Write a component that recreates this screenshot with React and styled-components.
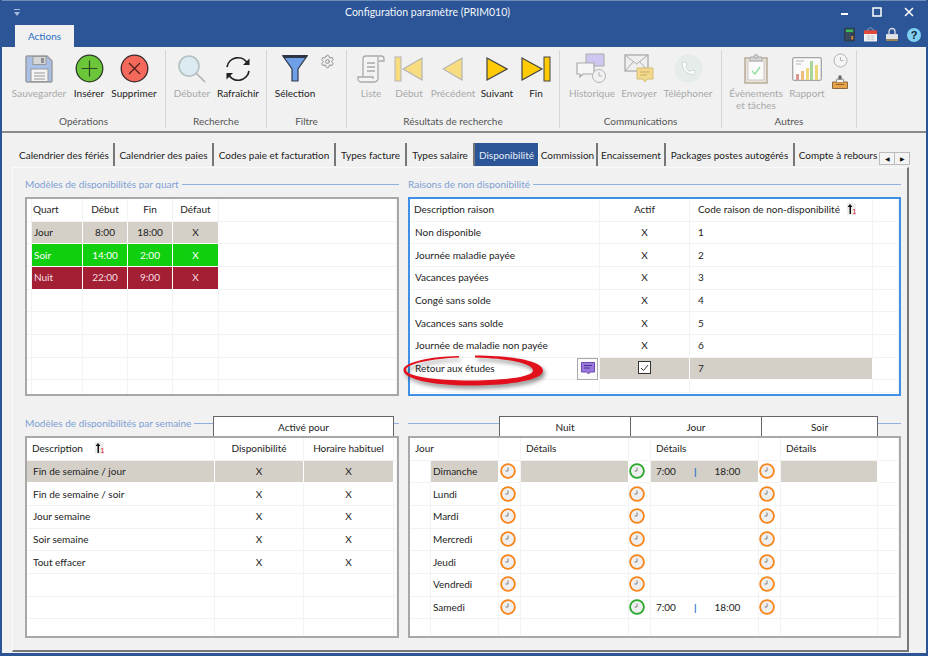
import styled, { createGlobalStyle } from "styled-components";
import { Settings, Phone } from "lucide-react";

const GlobalStyle = createGlobalStyle`
  html, body { margin: 0; padding: 0; background: #f1f1f1; }
  body { font-family: Lato, Roboto, "Liberation Sans", sans-serif; font-size: 10px; color: #222; }
`;

const Window = styled.div`
  width: 928px;
  height: 656px;
  box-sizing: border-box;
  border-style: solid;
  border-color: #2b5597;
  border-width: 0 2px 3px 2px;
  background: #f1f1f1;
  display: flex;
  flex-direction: column;
  overflow: hidden;
`;

const TitleBar = styled.div`
  height: 47px;
  margin: 0 -2px;
  background: #2b5597;
  border-top: 1px solid #6f8db9;
  box-sizing: border-box;
  display: flex;
  flex-direction: column;
`;

const TitleRow = styled.div`
  height: 22px;
  display: flex;
  align-items: center;
  position: relative;
  padding: 0 3px 0 14px;
`;

const Title = styled.div`
  color: #f2f5fa;
  font-size: 10.5px;
  margin-left: 325px;
  flex: 1;
`;

const WinButton = styled.div`
  width: 32px;
  display: flex;
  justify-content: center;
`;

const TabRow = styled.div`
  height: 22px;
  margin-top: 2px;
  display: flex;
  justify-content: space-between;
  padding-left: 15px;
  padding-right: 7px;
`;

const RibbonTab = styled.div`
  width: 59px;
  background: #f1f1f1;
  color: #2a6fc4;
  display: flex;
  align-items: center;
  justify-content: center;
`;

const Tools = styled.div`
  display: flex;
  gap: 9px;
  align-items: center;
  padding-bottom: 3px;
`;

const Ribbon = styled.div`
  height: 84px;
  display: flex;
  border-bottom: 2px solid #8a8a8a;
  box-sizing: content-box;
`;

const Group = styled.div`
  width: ${(p) => p.$w}px;
  box-sizing: border-box;
  margin-top: 3px;
  margin-bottom: 3px;
  border-right: 1px solid #d6d6d6;
  display: flex;
  flex-direction: column;
`;

const GroupItems = styled.div`
  height: 64px;
  display: flex;
  padding-left: ${(p) => p.$pad}px;
`;

const GroupName = styled.div`
  text-align: center;
  color: #555;
  line-height: 14px;
`;

const RibbonBtn = styled.div`
  width: ${(p) => p.$w}px;
  display: flex;
  flex-direction: column;
  align-items: center;
  padding-top: 3px;
  color: ${(p) => (p.$off ? "#a9a9a9" : "#222")};
  text-align: center;
  line-height: 12px;
  white-space: nowrap;
`;

const IconSlot = styled.div`
  height: 31px;
  margin-bottom: 3px;
  display: flex;
  align-items: center;
  justify-content: center;
`;

const SmallCol = styled.div`
  width: 20px;
  margin-left: 3px;
  display: flex;
  flex-direction: column;
  align-items: center;
  gap: 7px;
  padding-top: 3px;
`;

const GearSlot = styled.div`
  padding-top: 4px;
  margin-left: 2px;
  color: #8b8b8b;
`;

const Content = styled.div`
  flex: 1;
  display: flex;
  flex-direction: column;
  padding-top: 10px;
  min-height: 0;
`;

const TabStrip = styled.div`
  height: 24px;
  display: flex;
  padding-left: 13px;
  position: relative;
`;

const TabItem = styled.div`
  width: ${(p) => p.$w}px;
  box-sizing: border-box;
  display: flex;
  align-items: center;
  justify-content: center;
  white-space: nowrap;
  margin-bottom: 1px;
  color: ${(p) => (p.$on ? "#e6edf7" : "#222")};
  background: ${(p) => (p.$on ? "#2b5597" : "transparent")};
  border-right: ${(p) => (p.$last ? "none" : p.$on ? "1px solid #fff" : "2px solid #777")};
`;

const Arrows = styled.div`
  position: absolute;
  left: 878px;
  top: 9px;
  display: flex;
`;

const ArrowBtn = styled.div`
  width: 14px;
  height: 11px;
  border: 1px solid #bbb;
  margin-left: -1px;
  background: #f4f4f4;
  color: #111;
  font-size: 6px;
  line-height: 11px;
  text-align: center;
`;

const Panel = styled.div`
  margin-left: 10px;
  width: 897px;
  height: 485px;
  box-sizing: border-box;
  border-left: 1px solid #fafafa;
  border-top: 1px solid #fafafa;
  border-right: 2px solid #777;
  border-bottom: 2px solid #777;
  padding: 10px 0 0 12px;
  display: grid;
  grid-template-columns: 374px 493px;
  grid-template-rows: 218px 222px;
  column-gap: 9px;
  row-gap: 20px;
`;

const Section = styled.section`
  display: flex;
  flex-direction: column;
  min-width: 0;
`;

const Head = styled.div`
  height: 19px;
  display: flex;
  align-items: flex-start;
`;

const HeadTabbed = styled(Head)`
  height: 20px;
`;

const Label = styled.div`
  height: 11px;
  line-height: 12px;
  margin-top: ${(p) => p.$top || 0}px;
  overflow: hidden;
  color: #7d9fd3;
  white-space: nowrap;
  padding-right: 3px;
`;

const Rule = styled.div`
  flex: ${(p) => (p.$w ? `0 0 ${p.$w}px` : 1)};
  height: 1px;
  background: #8fb0e0;
  margin-top: ${(p) => p.$top || 6}px;
`;

const HeadTab = styled.div`
  width: ${(p) => p.$w}px;
  height: 20px;
  box-sizing: border-box;
  background: #fff;
  border: 1px solid #666;
  border-bottom: none;
  margin-left: -1px;
  text-align: center;
  line-height: 20px;
`;

const TableBox = styled.div`
  height: ${(p) => p.$h}px;
  box-sizing: border-box;
  background: #fff;
  border: ${(p) => (p.$focus ? "2px solid #3f8fe6" : "2px solid #a8a8a8")};
  overflow: ${(p) => (p.$focus ? "visible" : "hidden")};
`;

const Row = styled.div`
  display: grid;
  grid-template-columns: ${(p) => p.$cols};
  height: 22.67px;
  position: relative;
`;

const ShortRow = styled(Row)`
  height: 13px;
`;

const Cell = styled.div`
  display: flex;
  align-items: center;
  justify-content: ${(p) => (p.$center ? "center" : "flex-start")};
  padding-left: ${(p) => (p.$center ? 0 : p.$pad ?? 2)}px;
  padding-bottom: 1px;
  border-right: 1px solid ${(p) => (p.$bg ? "#fff" : "#f3f3f3")};
  border-bottom: 1px solid ${(p) => (p.$bg ? "#fff" : "#f3f3f3")};
  background: ${(p) => p.$bg || "transparent"};
  color: ${(p) => p.$fg || "#222"};
  grid-column: ${(p) => (p.$span ? `span ${p.$span}` : "auto")};
  white-space: nowrap;
  min-width: 0;
  gap: ${(p) => p.$gap || 0}px;
`;

const CommentBtn = styled.div`
  position: absolute;
  left: 167px;
  top: 0;
  width: 21px;
  height: 22px;
  box-sizing: border-box;
  border: 1px solid #aaa;
  background: #fafafa;
  display: flex;
  align-items: center;
  justify-content: center;
`;

const Check = styled.div`
  width: 11px;
  height: 11px;
  border: 1px solid #333;
  background: #fff;
  display: flex;
  align-items: center;
  justify-content: center;
`;

const Circled = styled.svg`
  position: absolute;
  left: -7px;
  top: -3px;
  filter: drop-shadow(2px 3px 2px rgba(0, 0, 0, 0.45));
  pointer-events: none;
`;

const TimeSep = styled.span`
  color: #2a6fc4;
  margin: 0 18px;
  font-weight: 700;
`;

const GREY = "#d4d0c8";
const GREEN = "#0fcf0f";
const RED = "#a31f34";

const Save = () => (
  <svg width="28" height="28" viewBox="0 0 28 28">
    <path d="M2 1h20l5 5v20a1 1 0 0 1-1 1H2a1 1 0 0 1-1-1V2a1 1 0 0 1 1-1z" fill="#a9bfe6" stroke="#9a9a9a" strokeWidth="1.4" />
    <rect x="8" y="1.5" width="13" height="8" fill="#d7d7d7" stroke="#999" />
    <rect x="16" y="3" width="3" height="5" fill="#8f8f8f" />
    <rect x="6" y="14" width="17" height="12.5" fill="#f4f4f4" stroke="#999" />
    <path d="M9 18h11M9 21h11M9 24h11" stroke="#999" />
  </svg>
);

const Plus = () => (
  <svg width="29" height="29" viewBox="0 0 29 29">
    <circle cx="14.5" cy="14.5" r="13.3" fill="#6cc63a" stroke="#2f3a2a" strokeWidth="1.3" />
    <path d="M14.5 6.5v16M6.5 14.5h16" stroke="#2a4a1d" strokeWidth="1.2" />
  </svg>
);

const Cross = () => (
  <svg width="29" height="29" viewBox="0 0 29 29">
    <circle cx="14.5" cy="14.5" r="13.3" fill="#f4695c" stroke="#3a2a2a" strokeWidth="1.3" />
    <path d="M9 9l11 11M20 9L9 20" stroke="#4a1f1a" strokeWidth="1.2" />
  </svg>
);

const Search = () => (
  <svg width="30" height="30" viewBox="0 0 30 30">
    <circle cx="12" cy="12" r="10" fill="#dcebf1" stroke="#b4c0c2" strokeWidth="1.6" />
    <path d="M19.5 19.5L28 28" stroke="#b0b0b0" strokeWidth="1.6" />
  </svg>
);

const Refresh = () => (
  <svg width="28" height="28" viewBox="0 0 28 28" fill="none" stroke="#222" strokeWidth="1.7">
    <path d="M3 12A11 11 0 0 1 23.5 8.5" />
    <path d="M25 16A11 11 0 0 1 4.5 19.5" />
    <path d="M25.5 3.5v6.5h-6.5" fill="#222" stroke="none" />
    <path d="M2.5 24.500v-6.500h6.500" fill="#222" stroke="none" />
  </svg>
);

const Funnel = () => (
  <svg width="28" height="29" viewBox="0 0 28 29">
    <path d="M2 2h24L17 15v12h-6V15z" fill="#6f9fe6" stroke="#333b4a" strokeWidth="1.2" />
    <path d="M1 1h26l-2 3H3z" fill="#2d3444" />
  </svg>
);

const Scroll = () => (
  <svg width="28" height="28" viewBox="0 0 28 28" fill="#f4f4f4" stroke="#a9a9a9" strokeWidth="1.3">
    <path d="M6 22V4a3 3 0 0 1 3-3h15a3 3 0 0 1 3 3v2h-5" />
    <path d="M21 2v20a4 4 0 0 1-4 5H4a3 3 0 0 1-3-3v-2h15v2" />
    <path d="M10 8h8M10 12h8M10 16h8" />
  </svg>
);

const Tri = ({ dir, bar, off }) => {
  const fill = off ? "#f8dc80" : "#ffcb05";
  const line = off ? "#b5b5b5" : "#444";
  const left = dir === "left";
  return (
    <svg width={bar ? 30 : 22} height="26" viewBox={bar ? "0 0 30 26" : "0 0 22 26"}>
      {bar && <rect x={left ? 1 : 23} y="1" width="6" height="24" fill={fill} stroke={line} />}
      {left && <path d={bar ? "M28 2v22L9 13z" : "M20 2v22L1 13z"} fill={fill} stroke={line} strokeWidth="1.2" />}
      {!left && <path d="M1 2v22l20-11z" fill={fill} stroke={line} strokeWidth="1.2" />}
    </svg>
  );
};

const History = () => (
  <svg width="32" height="31" viewBox="0 0 32 31">
    <path d="M10 1h18v12H10z" fill="#cfc6f2" stroke="#aaa" />
    <path d="M1 10h17v11H7l-3 3v-3H1z" fill="#f6f6f6" stroke="#aaa" strokeWidth="1.2" />
    <circle cx="23" cy="23" r="6.500" fill="#f1f1f1" stroke="#b5b5b5" />
    <path d="M23 19v4h3" fill="none" stroke="#b5b5b5" />
  </svg>
);

const Mail = () => (
  <svg width="30" height="30" viewBox="0 0 30 30">
    <rect x="1" y="1" width="23" height="16" fill="#efefef" stroke="#aaa" strokeWidth="1.3" />
    <path d="M1 1l11.500 9L24 1M1 17l8-9M24 17l-8-9" fill="none" stroke="#aaa" />
    <path d="M13 14h16v11h-6l-2 3-2-3h-6z" fill="#f2d98e" stroke="#d5bd72" />
    <path d="M16 18h10M16 21h7" stroke="#c9ad5e" />
  </svg>
);

const Tel = () => (
  <svg width="29" height="29" viewBox="0 0 29 29">
    <circle cx="14.5" cy="14.5" r="14" fill="#e5ecea" />
    <g transform="translate(7 7)">
      <Phone size={15} color="#c5cccb" fill="#fff" strokeWidth={1.3} />
    </g>
  </svg>
);

const Clipboard = () => (
  <svg width="24" height="30" viewBox="0 0 24 30">
    <rect x="1" y="4" width="22" height="25" fill="#e9e3d8" stroke="#b9ab9b" strokeWidth="1.5" />
    <rect x="4" y="7" width="16" height="19" fill="#fbfbfb" stroke="#c9c9c9" />
    <path d="M6 3h12v4H6z" fill="#d5d5d5" stroke="#aaa" />
    <circle cx="12" cy="2.500" r="2" fill="#d5d5d5" stroke="#aaa" />
    <path d="M8 17l3 3 5-7" fill="none" stroke="#8fdc9a" strokeWidth="1.3" />
  </svg>
);

const Chart = () => (
  <svg width="30" height="24" viewBox="0 0 30 24">
    <rect x="0.700" y="0.700" width="28.600" height="22.600" rx="1.500" fill="#fafafa" stroke="#a5a5a5" strokeWidth="1.300" />
    <rect x="4" y="17" width="3" height="6" fill="#dc9a8e" />
    <rect x="9" y="14" width="3" height="9" fill="#edbb7c" />
    <rect x="14" y="11" width="3" height="12" fill="#edd778" />
    <rect x="18" y="4" width="3" height="19" fill="#a9d49a" />
    <rect x="23" y="8" width="3" height="15" fill="#edd778" />
    <path d="M4 4h8M4 7h5" stroke="#b5b5b5" />
  </svg>
);

const SmallClock = () => (
  <svg width="15" height="15" viewBox="0 0 15 15" fill="none" stroke="#b5b5b5">
    <circle cx="7.500" cy="7.500" r="6.500" fill="#f5f5f5" />
    <path d="M7.500 4v3.500h3" />
  </svg>
);

const Tray = () => (
  <svg width="16" height="14" viewBox="0 0 16 14">
    <path d="M0.500 7h15v6.500H0.500z" fill="#e9a24c" stroke="#8a6a3a" />
    <path d="M4 7l1-3h6l1 3" fill="#f3f3f3" stroke="#888" />
    <rect x="6.500" y="0.500" width="3" height="4" fill="#666" />
    <path d="M4 9.500h8" stroke="#8a5a2a" />
  </svg>
);

const Calculator = () => (
  <svg width="11" height="15" viewBox="0 0 12 15">
    <rect width="12" height="15" rx="1" fill="#2f3d52" />
    <rect x="2" y="2" width="8" height="3" fill="#3dbb5a" />
    <path d="M2 7h2M5 7h2M2 9.500h2M5 9.500h2M2 12h2M5 12h2" stroke="#5f6c80" />
    <rect x="8" y="9" width="2" height="4" fill="#e08b3c" />
  </svg>
);

const Calendar = () => (
  <svg width="13" height="15" viewBox="0 0 14 15">
    <rect y="4" width="14" height="11" fill="#f4f4f4" />
    <rect y="3" width="14" height="4" fill="#e0483c" />
    <path d="M3 3l4-3 4 3" fill="none" stroke="#9aa8c0" />
    <path d="M2 9h10M2 11h10M2 13h10M5 8v6M9 8v6" stroke="#b9c1cf" strokeWidth="0.600" />
  </svg>
);

const Lock = () => (
  <svg width="12" height="15" viewBox="0 0 14 15">
    <path d="M3.500 7V4a3.500 3.500 0 0 1 7 0v3" fill="none" stroke="#d9dee7" strokeWidth="1.500" />
    <rect y="7" width="14" height="6" fill="#dfe2e7" />
    <rect y="13" width="14" height="2" fill="#a8884a" />
  </svg>
);

const Help = () => (
  <svg width="14" height="14" viewBox="0 0 14 14">
    <circle cx="7" cy="7" r="7" fill="#7fd0f2" />
    <text x="7" y="11" textAnchor="middle" fontSize="11" fontWeight="700" fontFamily="Liberation Sans, sans-serif" fill="#123">?</text>
  </svg>
);

const SortMark = () => (
  <svg width="9" height="12" viewBox="0 0 9 12">
    <rect width="9" height="12" fill="#eee" />
    <path d="M3 1l2.500 3H4v7H2.500V4H0.500z" fill="#111" />
    <text x="5.500" y="11" fontSize="7" fontFamily="Liberation Sans, sans-serif" fill="#e01010">1</text>
  </svg>
);

const Clock = ({ on }) => (
  <svg width="16" height="16" viewBox="0 0 16 16">
    <circle cx="8" cy="8" r="6.900" fill="#efefef" stroke={on ? "#27a82a" : "#f7851a"} strokeWidth="1.800" />
    <path d="M8 4.500V8H5.500" fill="none" stroke="#777" strokeWidth="0.900" />
  </svg>
);

const groups = [
  { name: "Opérations", w: 164, pad: 6, items: [
    { label: "Sauvegarder", w: 62, off: true, icon: <Save /> },
    { label: "Insérer", w: 38, icon: <Plus /> },
    { label: "Supprimer", w: 52, icon: <Cross /> },
  ] },
  { name: "Recherche", w: 101, pad: 3, items: [
    { label: "Débuter", w: 46, off: true, icon: <Search /> },
    { label: "Rafraîchir", w: 46, icon: <Refresh /> },
  ] },
  { name: "Filtre", w: 80, pad: 5, gear: true, items: [
    { label: "Sélection", w: 46, icon: <Funnel /> },
  ] },
  { name: "Résultats de recherche", w: 213, pad: 8, items: [
    { label: "Liste", w: 32, off: true, icon: <Scroll /> },
    { label: "Début", w: 44, off: true, icon: <Tri dir="left" bar off /> },
    { label: "Précédent", w: 44, off: true, icon: <Tri dir="left" off /> },
    { label: "Suivant", w: 44, icon: <Tri dir="right" /> },
    { label: "Fin", w: 34, icon: <Tri dir="right" bar /> },
  ] },
  { name: "Communications", w: 162, pad: 5, items: [
    { label: "Historique", w: 54, off: true, icon: <History /> },
    { label: "Envoyer", w: 40, off: true, icon: <Mail /> },
    { label: "Téléphoner", w: 58, off: true, icon: <Tel /> },
  ] },
  { name: "Autres", w: 135, pad: 3, small: true, items: [
    { label: "Évènements", label2: "et tâches", w: 62, off: true, icon: <Clipboard /> },
    { label: "Rapport", w: 40, off: true, icon: <Chart /> },
  ] },
];

const tabs = [
  ["Calendrier des fériés", 100], ["Calendrier des paies", 99], ["Codes paie et facturation", 122],
  ["Types facture", 71], ["Types salaire", 68], ["Disponibilité", 64], ["Commission", 59],
  ["Encaissement", 68], ["Packages postes autogérés", 129], ["Compte à rebours", 86],
];

const QUART_COLS = "5px 51px 45px 45px 46px 1fr";
const quarts = [
  ["Jour", "8:00", "18:00", "X", GREY, "#222"],
  ["Soir", "14:00", "2:00", "X", GREEN, "#fff"],
  ["Nuit", "22:00", "9:00", "X", RED, "#f4dfe2"],
];

const RAISON_COLS = "190px 90px 183px 1fr";
const raisons = [
  ["Non disponible", "1"], ["Journée maladie payée", "2"], ["Vacances payées", "3"], ["Congé sans solde", "4"],
  ["Vacances sans solde", "5"], ["Journée de maladie non payée", "6"],
];

const SEMAINE_COLS = "188px 89px 90px 1fr";
const semaines = ["Fin de semaine / jour", "Fin de semaine / soir", "Jour semaine", "Soir semaine", "Tout effacer"];

const JOUR_COLS = "21px 68px 22px 108px 22px 108px 22px 97px 1fr";
const jours = ["Dimanche", "Lundi", "Mardi", "Mercredi", "Jeudi", "Vendredi", "Samedi"];

function Hours() {
  return (
    <>
      7:00<TimeSep>|</TimeSep>18:00
    </>
  );
}

function EmptyRows({ count, cols, cells }) {
  return Array.from({ length: count }, (_, i) => (
    <Row $cols={cols} key={i}>
      {Array.from({ length: cells }, (_, c) => <Cell key={c} />)}
    </Row>
  ));
}

export default function App() {
  return (
    <>
      <GlobalStyle />
      <Window>
        <TitleBar>
          <TitleRow>
            <svg width="6" height="7" viewBox="0 0 6 7"><path d="M0 0h6v1H0zM0 3h6L3 7z" fill="#a9bad6" /></svg>
            <Title>Configuration paramètre (PRIM010)</Title>
            <WinButton><svg width="8" height="8"><rect y="5" width="7" height="2" fill="#fff" /></svg></WinButton>
            <WinButton><svg width="10" height="10"><rect x="1" y="1" width="8" height="8" fill="none" stroke="#fff" strokeWidth="1.500" /></svg></WinButton>
            <WinButton><svg width="10" height="10"><path d="M1 1l8 8M9 1L1 9" stroke="#fff" strokeWidth="1.500" /></svg></WinButton>
          </TitleRow>
          <TabRow>
            <RibbonTab>Actions</RibbonTab>
            <Tools><Calculator /><Calendar /><Lock /><Help /></Tools>
          </TabRow>
        </TitleBar>

        <Ribbon>
          {groups.map((g) => (
            <Group $w={g.w} key={g.name}>
              <GroupItems $pad={g.pad}>
                {g.items.map((it) => (
                  <RibbonBtn $w={it.w} $off={it.off} key={it.label}>
                    <IconSlot>{it.icon}</IconSlot>
                    {it.label}
                    {it.label2 && <div>{it.label2}</div>}
                  </RibbonBtn>
                ))}
                {g.gear && <GearSlot><Settings size={15} strokeWidth={1.6} /></GearSlot>}
                {g.small && <SmallCol><SmallClock /><Tray /></SmallCol>}
              </GroupItems>
              <GroupName>{g.name}</GroupName>
            </Group>
          ))}
        </Ribbon>

        <Content>
          <TabStrip>
            {tabs.map(([t, w], i) => (
              <TabItem $w={w} $on={t === "Disponibilité"} $last={i === tabs.length - 1} key={t}>{t}</TabItem>
            ))}
            <Arrows><ArrowBtn>◀</ArrowBtn><ArrowBtn>▶</ArrowBtn></Arrows>
          </TabStrip>

          <Panel>
            <Section>
              <Head><Label>Modèles de disponibilités par quart</Label><Rule /></Head>
              <TableBox $h={199}>
                <Row $cols={QUART_COLS}>
                  <Cell /><Cell $pad={1}>Quart</Cell><Cell $center>Début</Cell><Cell $center>Fin</Cell><Cell $center>Défaut</Cell><Cell />
                </Row>
                {quarts.map(([q, d, f, x, bg, fg]) => (
                  <Row $cols={QUART_COLS} key={q}>
                    <Cell />
                    <Cell $bg={bg} $fg={fg}>{q}</Cell>
                    <Cell $bg={bg} $fg={fg} $center>{d}</Cell>
                    <Cell $bg={bg} $fg={fg} $center>{f}</Cell>
                    <Cell $bg={bg} $fg={fg} $center>{x}</Cell>
                    <Cell />
                  </Row>
                ))}
                <EmptyRows count={5} cols={QUART_COLS} cells={6} />
              </TableBox>
            </Section>

            <Section>
              <Head><Label>Raisons de non disponibilité</Label><Rule /></Head>
              <TableBox $h={199} $focus>
                <Row $cols={RAISON_COLS}>
                  <Cell $pad={4}>Description raison</Cell><Cell $center>Actif</Cell>
                  <Cell $pad={8} $gap={7}>Code raison de non-disponibilité <SortMark /></Cell><Cell />
                </Row>
                {raisons.map(([r, c]) => (
                  <Row $cols={RAISON_COLS} key={r}>
                    <Cell $pad={5}>{r}</Cell><Cell $center>X</Cell><Cell $pad={8}>{c}</Cell><Cell />
                  </Row>
                ))}
                <Row $cols={RAISON_COLS}>
                  <Cell $pad={5}>Retour aux études</Cell>
                  <Cell $bg={GREY} $center><Check><svg width="9" height="8" viewBox="0 0 9 8"><path d="M1 4l2.500 2.500L8 1" fill="none" stroke="#333" /></svg></Check></Cell>
                  <Cell $bg={GREY} $pad={8}>7</Cell>
                  <Cell />
                  <CommentBtn>
                    <svg width="14" height="13" viewBox="0 0 14 13">
                      <path d="M0.500 0.500h13v9.500H9l-1.500 2-1.500-2H0.500z" fill="#9a78dc" stroke="#6a4bb0" />
                      <path d="M3 3.500h8M3 6h6" stroke="#4a3590" />
                    </svg>
                  </CommentBtn>
                  <Circled width="145" height="36" viewBox="0 0 145 36">
                    <path fillRule="evenodd" fill="#e2101c" d="M72 0.500C112 0.500 140 7 140 15.500C140 25 108 30.500 68 30.500C28 30.500 0.500 24 0.500 15C0.500 7 28 1.500 56 1L56 2.500C30 3.500 3 8.500 3 15C3 21 30 25.500 68 25.500C104 25.500 130 21.500 130 15.500C130 9 108 3.500 72 2.500z" />
                  </Circled>
                </Row>
                <ShortRow $cols={RAISON_COLS}><Cell /><Cell /><Cell /><Cell /></ShortRow>
              </TableBox>
            </Section>

            <Section>
              <HeadTabbed>
                <Label $top={1}>Modèles de disponibilités par semaine</Label>
                <Rule $top={7} />
                <HeadTab $w={181}>Activé pour</HeadTab>
                <Rule $top={7} $w={5} />
              </HeadTabbed>
              <TableBox $h={202}>
                <Row $cols={SEMAINE_COLS}>
                  <Cell $pad={5} $gap={12}>Description <SortMark /></Cell><Cell $center>Disponibilité</Cell><Cell $center>Horaire habituel</Cell><Cell />
                </Row>
                {semaines.map((s, i) => (
                  <Row $cols={SEMAINE_COLS} key={s}>
                    <Cell $pad={6} $bg={i === 0 ? GREY : undefined}>{s}</Cell>
                    <Cell $center $bg={i === 0 ? GREY : undefined}>X</Cell>
                    <Cell $center $bg={i === 0 ? GREY : undefined}>X</Cell>
                    <Cell />
                  </Row>
                ))}
                <EmptyRows count={3} cols={SEMAINE_COLS} cells={4} />
              </TableBox>
            </Section>

            <Section>
              <HeadTabbed>
                <Rule $top={7} $w={92} />
                <HeadTab $w={132}>Nuit</HeadTab>
                <HeadTab $w={132}>Jour</HeadTab>
                <HeadTab $w={117}>Soir</HeadTab>
                <Rule $top={7} />
              </HeadTabbed>
              <TableBox $h={202}>
                <Row $cols={JOUR_COLS}>
                  <Cell $span={2} $pad={5}>Jour</Cell><Cell /><Cell $pad={5}>Détails</Cell><Cell /><Cell $pad={5}>Détails</Cell><Cell /><Cell $pad={5}>Détails</Cell><Cell />
                </Row>
                {jours.map((j) => {
                  const sel = j === "Dimanche" ? GREY : undefined;
                  const jourOn = j === "Dimanche" || j === "Samedi";
                  return (
                    <Row $cols={JOUR_COLS} key={j}>
                      <Cell />
                      <Cell $bg={sel}>{j}</Cell>
                      <Cell $pad={1}><Clock /></Cell>
                      <Cell $bg={sel} />
                      <Cell $pad={0}><Clock on={jourOn} /></Cell>
                      <Cell $bg={sel} $pad={5}>{jourOn && <Hours />}</Cell>
                      <Cell $pad={0}><Clock /></Cell>
                      <Cell $bg={sel} />
                      <Cell />
                    </Row>
                  );
                })}
                <Row $cols={JOUR_COLS}>
                  {Array.from({ length: 9 }, (_, c) => <Cell key={c} />)}
                </Row>
              </TableBox>
            </Section>
          </Panel>
        </Content>
      </Window>
    </>
  );
}
